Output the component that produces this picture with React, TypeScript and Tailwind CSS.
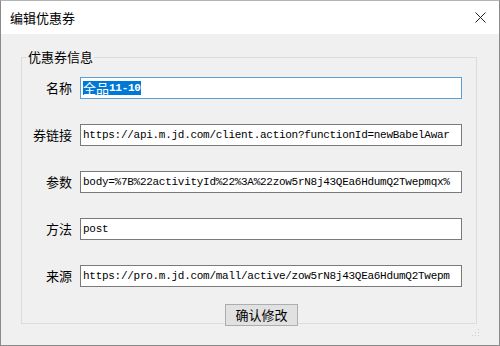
const ui = { fontFamily: '"Noto Sans CJK SC", "Microsoft YaHei", sans-serif' };
const mono = { fontFamily: '"Liberation Mono", "Noto Sans CJK SC", monospace' };

type Field = { label: string; value: string; focused?: boolean };

const fields: Field[] = [
  { label: "名称", value: "", focused: true },
  { label: "券链接", value: "https://api.m.jd.com/client.action?functionId=newBabelAwar" },
  { label: "参数", value: "body=%7B%22activityId%22%3A%22zow5rN8j43QEa6HdumQ2Twepmqx%" },
  { label: "方法", value: "post" },
  { label: "来源", value: "https://pro.m.jd.com/mall/active/zow5rN8j43QEa6HdumQ2Twepm" },
];

function Input({ field }: { field: Field }) {
  return (
    <div
      className={`flex h-[22px] w-[382px] items-center overflow-hidden whitespace-nowrap bg-white pl-[2px] text-[11px] tracking-[-0.28px] text-black border ${
        field.focused ? "border-[#5a9fd8]" : "border-[#7a7a7a]"
      }`}
      style={mono}
    >
      {field.focused ? (
        <span className="flex h-[14px] items-center bg-[#0078d7] text-white">
          <span className="text-[13px] tracking-normal" style={ui}>全品</span>
          <span className="font-bold">11-10</span>
        </span>
      ) : (
        field.value
      )}
    </div>
  );
}

export default function App() {
  return (
    <div className="flex h-[346px] w-[500px] flex-col border border-t-[#b5b5b5] border-[#8a8a8a] bg-[#f0f0f0]" style={ui}>
      <div className="flex h-[33px] items-center justify-between bg-white pl-[9px] pr-[13px]">
        <span className="text-[13px] text-black">编辑优惠券</span>
        <svg width="11" height="11" viewBox="0 0 11 11">
          <path d="M0.5 0.5 L10.5 10.5 M10.5 0.5 L0.5 10.5" stroke="#222" strokeWidth="1" />
        </svg>
      </div>
      <div className="relative flex-1 pl-[20px]">
        <fieldset className="mt-[14px] h-[276px] w-[456px] border border-[#dcdcdc]">
          <legend className="ml-[5px] px-[1px] text-[13px] leading-[18px] text-black">优惠券信息</legend>
          <div className="flex flex-col gap-[25px] pt-[11px]">
            {fields.map((f) => (
              <div key={f.label} className="flex items-center">
                <span className="w-[50px] text-right text-[13px] text-black">{f.label}</span>
                <div className="ml-[8px]">
                  <Input field={f} />
                </div>
              </div>
            ))}
          </div>
          <button
            type="button"
            className="ml-[203px] mt-[17px] h-[22px] w-[73px] border border-[#adadad] bg-[#e1e1e1] text-[13px] text-black"
          >
            确认修改
          </button>
        </fieldset>
        <svg className="absolute bottom-[8px] right-[19px]" width="8" height="8" viewBox="0 0 8 8">
          <rect x="6" y="0" width="1" height="1" fill="#cfcfcf" />
          <rect x="3" y="3" width="1" height="1" fill="#cfcfcf" />
          <rect x="6" y="3" width="1" height="1" fill="#cfcfcf" />
          <rect x="0" y="6" width="1" height="1" fill="#cfcfcf" />
          <rect x="3" y="6" width="1" height="1" fill="#cfcfcf" />
          <rect x="6" y="6" width="1" height="1" fill="#cfcfcf" />
        </svg>
      </div>
    </div>
  );
}
